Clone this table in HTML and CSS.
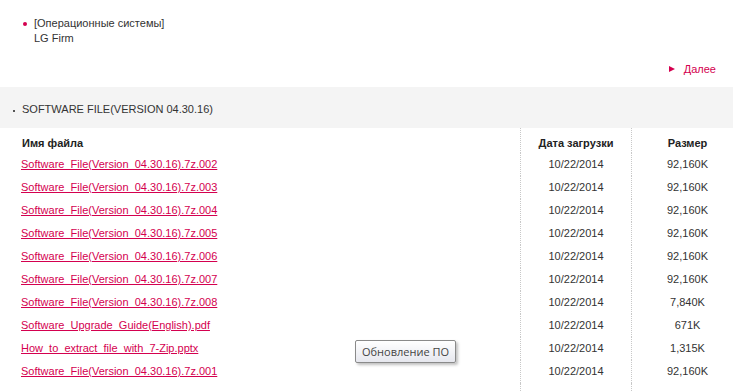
FILE: index.html
```html
<!DOCTYPE html>
<html lang="ru">
<head>
<meta charset="utf-8">
<title>LG Firm</title>
<link rel="stylesheet" href="styles.css">
</head>
<body>
<div class="page">
  <ul class="cats">
    <li><span class="cat-title">[Операционные системы]</span><span class="cat-name">LG Firm</span></li>
  </ul>
  <div class="more-row"><a class="more" href="#"><span class="tri"></span>Далее</a></div>
  <div class="band"><span class="band-dot"></span>SOFTWARE FILE(VERSION 04.30.16)</div>
  <div class="table">
    <div class="th c1">Имя файла</div><div class="th c2">Дата загрузки</div><div class="th c3">Размер</div>
    <div class="td c1"><a href="#">Software_File(Version_04.30.16).7z.002</a></div><div class="td c2">10/22/2014</div><div class="td c3">92,160K</div>
    <div class="td c1"><a href="#">Software_File(Version_04.30.16).7z.003</a></div><div class="td c2">10/22/2014</div><div class="td c3">92,160K</div>
    <div class="td c1"><a href="#">Software_File(Version_04.30.16).7z.004</a></div><div class="td c2">10/22/2014</div><div class="td c3">92,160K</div>
    <div class="td c1"><a href="#">Software_File(Version_04.30.16).7z.005</a></div><div class="td c2">10/22/2014</div><div class="td c3">92,160K</div>
    <div class="td c1"><a href="#">Software_File(Version_04.30.16).7z.006</a></div><div class="td c2">10/22/2014</div><div class="td c3">92,160K</div>
    <div class="td c1"><a href="#">Software_File(Version_04.30.16).7z.007</a></div><div class="td c2">10/22/2014</div><div class="td c3">92,160K</div>
    <div class="td c1"><a href="#">Software_File(Version_04.30.16).7z.008</a></div><div class="td c2">10/22/2014</div><div class="td c3">7,840K</div>
    <div class="td c1"><a href="#">Software_Upgrade_Guide(English).pdf</a></div><div class="td c2">10/22/2014</div><div class="td c3">671K</div>
    <div class="td c1"><a href="#">How_to_extract_file_with_7-Zip.pptx</a></div><div class="td c2">10/22/2014</div><div class="td c3">1,315K</div>
    <div class="td c1"><a href="#">Software_File(Version_04.30.16).7z.001</a></div><div class="td c2">10/22/2014</div><div class="td c3">92,160K</div>
    <div class="td c1 pad"></div><div class="td c2 pad"></div><div class="td c3 pad"></div>
  </div>
  <div class="tooltip">Обновление ПО</div>
</div>
</body>
</html>
```
FILE: styles.css
```css
html, body {
  margin: 0;
  padding: 0;
  overflow: hidden;
  background: #fff;
}
body {
  font-family: "Liberation Sans", Arial, sans-serif;
  font-size: 11px;
  color: #333;
}
.page {
  position: relative;
  width: 743px;
}
.cats {
  list-style: none;
  margin: 0;
  padding: 16px 0 0 34px;
}
.cats li {
  position: relative;
  line-height: 15px;
}
.cats li::before {
  content: "";
  position: absolute;
  left: -11px;
  top: 6px;
  width: 4px;
  height: 4px;
  border-radius: 50%;
  background: #d4004f;
}
.cat-title, .cat-name {
  display: block;
}
.more-row {
  display: flex;
  justify-content: flex-end;
  padding: 15px 27px 0 0;
  height: 26px;
  box-sizing: content-box;
}
.more {
  display: flex;
  align-items: center;
  gap: 9px;
  height: 15px;
  color: #d4004f;
  text-decoration: none;
}
.tri {
  width: 0;
  height: 0;
  border-top: 3.5px solid transparent;
  border-bottom: 3.5px solid transparent;
  border-left: 6px solid #d4004f;
}
.band {
  display: flex;
  align-items: center;
  height: 41px;
  background: #f4f4f4;
  padding-left: 22px;
  padding-top: 3px;
  box-sizing: border-box;
  color: #333;
}
.band-dot {
  width: 2px;
  height: 2px;
  background: #555;
  margin-left: -9px;
  margin-right: 7px;
  margin-top: 3px;
}
.table {
  display: grid;
  grid-template-columns: 520px 111px 112px;
}
.th {
  font-weight: bold;
  padding-top: 7px;
  padding-bottom: 2px;
  line-height: 16px;
  color: #222;
}
.td {
  line-height: 23px;
}
.pad { height: 22px; }
.c1 { padding-left: 21px; }
.th.c1 { padding-left: 22px; }
.c2, .c3 {
  text-align: center;
  border-left: 1px dotted #c8c8c8;
}
.c1 a {
  color: #d4004f;
  text-decoration: underline;
  text-underline-offset: 1px;
}
.tooltip {
  position: absolute;
  left: 355px;
  top: 340px;
  height: 23px;
  padding: 0 6px;
  box-sizing: border-box;
  border: 1px solid #8a8a8a;
  border-radius: 2px;
  background: linear-gradient(#ffffff, #e6e7ee);
  box-shadow: 2px 2px 3px rgba(0,0,0,0.25);
  font-family: "Open Sans", "Noto Sans", sans-serif;
  font-size: 11px;
  line-height: 21px;
  color: #444;
}
```
